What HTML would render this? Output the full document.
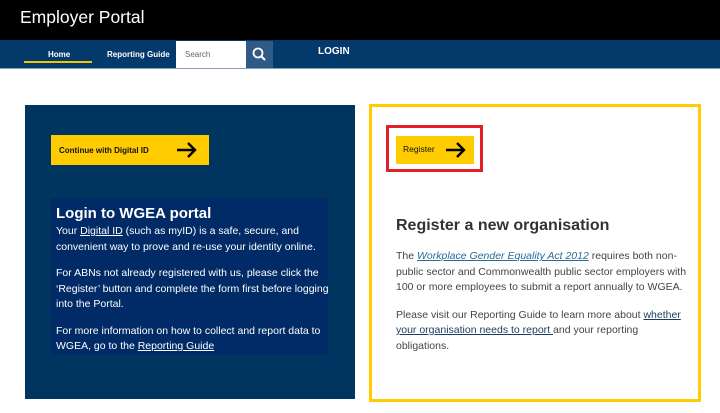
<!DOCTYPE html><html><head><style>
*{margin:0;padding:0;box-sizing:border-box}
body{width:720px;height:413px;background:#fff;font-family:"Liberation Sans",sans-serif;position:relative;overflow:hidden}
.a{position:absolute}
p{font-size:10.5px;line-height:15.5px}
</style></head><body>
<div class="a" style="left:0;top:0;width:720px;height:40px;background:#000"></div>
<div class="a" style="left:20px;top:7px;color:#fff;font-size:17.5px">Employer Portal</div>
<div class="a" style="left:0;top:40px;width:720px;height:28px;background:#043a6b"></div>
<div class="a" style="left:0;top:68px;width:720px;height:1px;background:#8aa0b8"></div>
<div class="a" style="left:48px;top:50px;color:#fff;font-size:8px;font-weight:bold">Home</div>
<div class="a" style="left:24px;top:61px;width:68px;height:2px;background:#f5c400"></div>
<div class="a" style="left:107px;top:50px;color:#fff;font-size:8px;font-weight:bold">Reporting Guide</div>
<div class="a" style="left:176px;top:41px;width:70px;height:27px;background:#fff"></div>
<div class="a" style="left:185px;top:50px;color:#666;font-size:8px">Search</div>
<div class="a" style="left:246px;top:41px;width:27px;height:27px;background:#2f5a86"></div>
<svg class="a" style="left:251px;top:46px" width="17" height="17"><circle cx="7" cy="7" r="4.5" stroke="#fff" stroke-width="1.8" fill="none"/><path d="M10.5 10.5L14 14" stroke="#fff" stroke-width="2"/></svg>
<div class="a" style="left:318px;top:46px;color:#fff;font-size:10px;font-weight:bold">LOGIN</div>

<div class="a" style="left:25px;top:105px;width:330px;height:294px;background:#00355f"></div>
<div class="a" style="left:51px;top:135px;width:158px;height:30px;background:#fecc00"></div>
<div class="a" style="left:59px;top:146px;font-size:8px;font-weight:bold;color:#111">Continue with Digital ID</div>
<svg class="a" style="left:176px;top:141px" width="22" height="18"><path d="M1 9H19M12 2L19 9L12 16" stroke="#000" stroke-width="2.4" fill="none"/></svg>
<div class="a" style="left:51px;top:198px;width:277px;height:157px;background:#002b66"></div>
<div class="a" style="left:56px;top:205px;color:#fff;font-size:15px;font-weight:bold">Login to WGEA portal</div>
<div class="a" style="left:56px;top:224px;width:285px;color:#fff">
<p>Your <u>Digital ID</u> (such as myID) is a safe, secure, and<br>convenient way to prove and re-use your identity online.</p>
<p style="margin-top:11px">For ABNs not already registered with us, please click the<br>‘Register’ button and complete the form first before logging<br>into the Portal.</p>
<p style="margin-top:11px">For more information on how to collect and report data to<br>WGEA, go to the <u>Reporting Guide</u></p></div>

<div class="a" style="left:369px;top:104px;width:332px;height:298px;border:3px solid #fecc00"></div>
<div class="a" style="left:386px;top:125px;width:97px;height:47px;border:3px solid #e0202a"></div>
<div class="a" style="left:396px;top:136px;width:78px;height:28px;background:#fecc00"></div>
<div class="a" style="left:403px;top:144px;font-size:8.5px;color:#111">Register</div>
<svg class="a" style="left:445px;top:141px" width="22" height="18"><path d="M1 9H19M12 2L19 9L12 16" stroke="#000" stroke-width="2.4" fill="none"/></svg>
<div class="a" style="left:396px;top:217px;color:#333;font-size:16px;font-weight:bold">Register a new organisation</div>
<div class="a" style="left:396px;top:249px;width:296px;color:#444">
<p>The <i><u style="color:#2a6b9a">Workplace Gender Equality Act 2012</u></i> requires both non-public sector and Commonwealth public sector employers with 100 or more employees to submit a report annually to WGEA.</p>
<p style="margin-top:12px">Please visit our Reporting Guide to learn more about <u style="color:#1b3a5c">whether your organisation needs to report </u>and your reporting obligations.</p></div>
</body></html>
